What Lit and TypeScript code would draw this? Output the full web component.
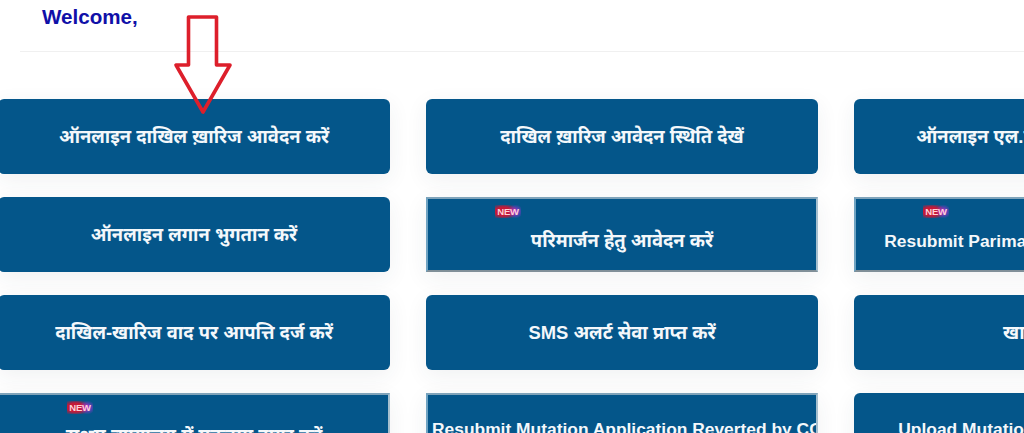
import { LitElement, html, css } from "lit";
import { customElement } from "lit/decorators.js";

interface Tile { text: string; square?: boolean; isNew?: boolean; pad?: number; latin?: boolean; }

const tiles: Tile[] = [
  { text: "ऑनलाइन दाखिल ख़ारिज आवेदन करें" },
  { text: "दाखिल ख़ारिज आवेदन स्थिति देखें" },
  { text: "ऑनलाइन एल.पी.सी. हेतु आवेदन करें" },
  { text: "ऑनलाइन लगान भुगतान करें" },
  { text: "परिमार्जन हेतु आवेदन करें", square: true, isNew: true, pad: 12 },
  { text: "Resubmit Parimarjan Reverted by DCLR", square: true, isNew: true, pad: 16, latin: true },
  { text: "दाखिल-खारिज वाद पर आपत्ति दर्ज करें" },
  { text: "SMS अलर्ट सेवा प्राप्त करें" },
  { text: "खाता विवरण" },
  { text: "सक्षम न्यायालय में मुकदमा दायर करें", square: true, isNew: true, pad: 10 },
  { text: "Resubmit Mutation Application Reverted by CO", square: true, latin: true },
  { text: "Upload Mutation Related Documents", latin: true },
];

@customElement("app-root")
export class AppRoot extends LitElement {
  static styles = css`
    :host {
      display: block;
      position: relative;
      width: 1024px;
      height: 433px;
      overflow: hidden;
      background: #fff;
      font-family: "Liberation Sans", Arial, "Noto Sans", sans-serif;
    }
    .welcome {
      margin: 0;
      padding: 5px 0 0 42px;
      height: 30px;
      font-size: 20.6px;
      line-height: 24px;
      font-weight: 700;
      color: #1010a8;
    }
    .rule {
      height: 1px;
      margin: 16px 0 0 20px;
      background: #f0f0f0;
    }
    .grid {
      display: grid;
      grid-template-columns: repeat(3, 392px);
      grid-auto-rows: 75px;
      column-gap: 36px;
      row-gap: 23px;
      width: 1250px;
      margin: 47px 0 0 -2px;
    }
    .tile {
      position: relative;
      display: flex;
      align-items: center;
      justify-content: safe center;
      box-sizing: border-box;
      overflow: hidden;
      padding: 0 4px 2px;
      background: #04568a;
      color: #f4f8fb;
      font-size: 18.4px;
      font-weight: 700;
      white-space: nowrap;
      border-radius: 6px;
      box-shadow: 0 6px 22px rgba(40, 50, 70, 0.07);
    }
    .tile.square {
      border-radius: 0;
      border: 2px solid;
      border-color: #7fa3ba #a6bfce #808f98 #6fa3c2;
    }
    .tile.latin { font-size: 17.4px; }
    .new {
      position: absolute;
      top: 6px;
      left: 67px;
      width: 26px;
      height: 13px;
      font-size: 9.5px;
      line-height: 13px;
      font-weight: 700;
      letter-spacing: -0.3px;
      text-align: center;
      color: #ffd0d6;
      background:
        radial-gradient(ellipse 8px 7px at 78% 50%, #b030e0 0%, rgba(176, 48, 224, 0) 100%),
        radial-gradient(ellipse 15px 8px at 32% 50%, #c41a38 55%, rgba(196, 26, 56, 0) 100%);
    }
    .arrow {
      position: absolute;
      left: 172px;
      top: 13px;
      width: 62px;
      height: 104px;
    }
  `;

  render() {
    return html`
      <h1 class="welcome">Welcome,</h1>
      <div class="rule"></div>
      <div class="grid">
        ${tiles.map((t) => html`
          <div
            class="tile ${t.square ? "square" : ""} ${t.latin ? "latin" : ""}"
            style=${t.pad ? `padding-top:${t.pad}px` : ""}
          >
            ${t.isNew ? html`<span class="new">NEW</span>` : ""}
            <span>${t.text}</span>
          </div>`)}
      </div>
      <svg class="arrow" viewBox="0 0 62 104" aria-hidden="true">
        <path d="M16.5 4H44.5V52H58L31 99L4 52H16.5Z" fill="none" stroke="#dd1f2b" stroke-width="3.6" stroke-linejoin="round"/>
      </svg>
    `;
  }
}
